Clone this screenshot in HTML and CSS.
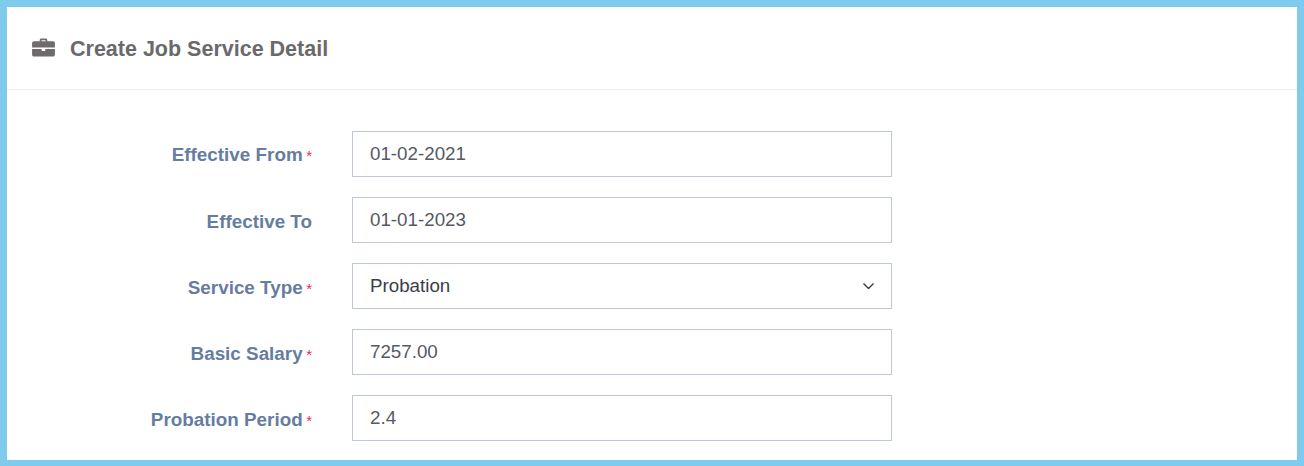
FILE: index.html
```html
<!DOCTYPE html>
<html lang="en">
<head>
    <meta charset="UTF-8">
    <title>Create Job Service Detail</title>
    <link rel="stylesheet" href="styles.css">
</head>
<body>
    <div class="card">
        <div class="card-head">
            <svg class="head-icon" width="23" height="19" viewBox="0 0 24 20">
                <path d="M8 4V2.2C8 1.2 8.8.5 9.700.5h4.600C15.200.5 16 1.200 16 2.200V4h-1.800V2.300H9.800V4z"/>
                <path d="M2 3.500h20c1.100 0 2 .9 2 2V10H0V5.500c0-1.100.9-2 2-2z"/>
                <path d="M0 11.500h10V13c0 .4.300.7.700.7h2.600c.4 0 .7-.3.700-.7v-1.500h10V17.500c0 1.100-.9 2-2 2H2c-1.100 0-2-.9-2-2z"/>
            </svg>
            <h3>Create Job Service Detail</h3>
        </div>
        <form class="form">
            <div class="row row-first">
                <label>Effective From<span class="req">*</span></label>
                <input type="text" value="01-02-2021">
            </div>
            <div class="row">
                <label>Effective To</label>
                <input type="text" value="01-01-2023">
            </div>
            <div class="row">
                <label>Service Type<span class="req">*</span></label>
                <div class="select">
                    <span>Probation</span>
                    <svg width="11" height="6" viewBox="0 0 11 6"><path d="M.5.500l5 5 5-5" fill="none" stroke="#343a40" stroke-width="1.400"/></svg>
                </div>
            </div>
            <div class="row">
                <label>Basic Salary<span class="req">*</span></label>
                <input type="text" value="7257.00">
            </div>
            <div class="row">
                <label>Probation Period<span class="req">*</span></label>
                <input type="text" value="2.4">
            </div>
        </form>
    </div>
</body>
</html>
```

FILE: styles.css
```css
* {
    margin: 0;
    padding: 0;
    box-sizing: border-box;
}
html, body {
    height: 100%;
}
body {
    background: #fff;
    font-family: "Liberation Sans", Arial, sans-serif;
    overflow: hidden;
}
.card {
    height: 466px;
    border: solid #7fcbee;
    border-width: 7px 7px 6px 7px;
    background: #fff;
}
.card-head {
    height: 83px;
    padding: 2px 24px 0 25px;
    display: flex;
    align-items: center;
    border-bottom: 1px solid #ebedf2;
}
.head-icon {
    fill: #6f6b6b;
    margin-right: 15px;
    margin-top: -4px;
}
.card-head h3 {
    font-size: 21.5px;
    font-weight: 700;
    color: #6a6a6c;
}
.form {
    padding-top: 41px;
    display: flex;
    flex-direction: column;
    gap: 20px;
}
.row {
    display: flex;
    align-items: center;
    height: 46px;
}
.row label {
    width: 305px;
    margin-right: 40px;
    padding-top: 4px;
    text-align: right;
    font-size: 18.850px;
    font-weight: 700;
    color: #667da1;
}
.row-first label {
    padding-top: 2px;
}
.req {
    color: #ee2a55;
    font-size: 15px;
    font-weight: 400;
    margin-left: 3.500px;
}
.row input, .select {
    width: 540px;
    height: 46px;
    border: 1px solid #bec8d9;
    background: #fff;
    padding: 0 17px;
    font-family: inherit;
    font-size: 18.750px;
    color: #575962;
    outline: none;
}
.select {
    display: flex;
    align-items: center;
    justify-content: space-between;
    color: #3a3d4a;
    padding-right: 17px;
}
```
